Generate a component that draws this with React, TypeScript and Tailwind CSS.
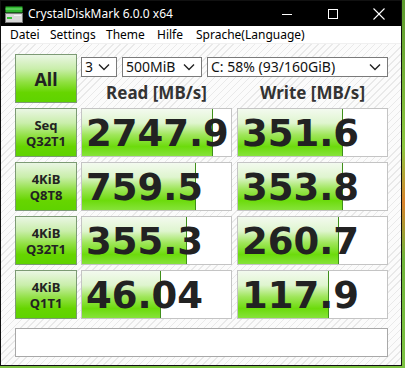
import React from "react";

type Row = { label: string; read: string; readBar: number; write: string; writeBar: number };

const rows: Row[] = [
  { label: "Seq\nQ32T1", read: "2747.9", readBar: 131, write: "351.6", writeBar: 105 },
  { label: "4KiB\nQ8T8", read: "759.5", readBar: 114, write: "353.8", writeBar: 105 },
  { label: "4KiB\nQ32T1", read: "355.3", readBar: 105, write: "260.7", writeBar: 101 },
  { label: "4KiB\nQ1T1", read: "46.04", readBar: 79, write: "117.9", writeBar: 91 },
];

const greenBtn =
  "border border-[#7c9a74] bg-[linear-gradient(to_bottom,#eaf6e4_0%,#c9eeaa_30%,#8fe040_58%,#66d500_80%,#5fd300_100%)] flex flex-col items-center justify-center text-[#222] font-bold";

function Chevron() {
  return (
    <svg width="12" height="8" viewBox="0 0 12 8" className="shrink-0">
      <polyline points="1,1.5 6,6.5 11,1.5" fill="none" stroke="#222" strokeWidth="1.4" />
    </svg>
  );
}

function Select({ text, w }: { text: string; w: string }) {
  return (
    <div className={`${w} h-[20px] bg-white border border-[#7a7a7a] flex items-center justify-between pl-[3px] pr-[6px] text-[14px] text-[#111] leading-none`}>
      <span>{text}</span>
      <Chevron />
    </div>
  );
}

function Cell({ value, bar }: { value: string; bar: number }) {
  return (
    <div className="relative w-[151px] h-[49px] bg-white border border-[#c4c4c4]">
      <div
        className="absolute left-0 top-0 bottom-0 border-r border-[#3f8f1a] bg-[linear-gradient(to_bottom,#f3faef_0%,#dff5cf_30%,#9fe65a_55%,#6cdb0c_80%,#86e33a_100%)]"
        style={{ width: bar }}
      />
      <div className="relative h-full flex items-center pl-[4px] pt-[1px] font-['DejaVu_Sans',sans-serif] text-[37px] font-bold text-[#222] leading-none whitespace-nowrap">
        {value}
      </div>
    </div>
  );
}

function AppIcon() {
  return (
    <svg width="18" height="17" viewBox="0 0 18 17">
      <rect x="0.5" y="0.5" width="17" height="6" fill="#2fb52f" />
      <rect x="0.5" y="2.5" width="17" height="1" fill="#7ee07e" />
      <rect x="0.5" y="7.5" width="17" height="9" fill="#d8d8d8" stroke="#777" />
      <rect x="2" y="11" width="5" height="2" fill="#34c334" />
      <rect x="9" y="9" width="7" height="1" fill="#f4f4f4" />
    </svg>
  );
}

export default function App() {
  return (
    <div className="w-[405px] h-[368px] bg-[linear-gradient(to_bottom,#5c9a2e,#8cc63f_40%,#d9822b_55%,#6fb33a_70%,#7cc242)] font-['Noto_Sans',sans-serif] overflow-hidden">
      <div className="w-[402px] h-[366px] bg-black border border-[#111] flex flex-col">
        {/* Title bar */}
        <div className="h-[25px] flex items-center text-white">
          <div className="ml-[4px] mt-[1px]">
            <AppIcon />
          </div>
          <span className="ml-[5px] text-[12px] leading-none">CrystalDiskMark 6.0.0 x64</span>
          <div className="ml-auto flex h-full">
            <div className="w-[46px] h-full flex items-center justify-center">
              <svg width="10" height="10" viewBox="0 0 10 10">
                <line x1="0" y1="5.5" x2="10" y2="5.5" stroke="#fff" strokeWidth="1" />
              </svg>
            </div>
            <div className="w-[46px] h-full flex items-center justify-center">
              <svg width="10" height="10" viewBox="0 0 10 10">
                <rect x="0.5" y="0.5" width="9" height="9" fill="none" stroke="#fff" strokeWidth="1" />
              </svg>
            </div>
            <div className="w-[45px] h-full flex items-center justify-center">
              <svg width="12" height="12" viewBox="0 0 12 12">
                <line x1="0.5" y1="0.5" x2="11.5" y2="11.5" stroke="#fff" strokeWidth="1.1" />
                <line x1="11.5" y1="0.5" x2="0.5" y2="11.5" stroke="#fff" strokeWidth="1.1" />
              </svg>
            </div>
          </div>
        </div>

        {/* Menu bar */}
        <div className="h-[18px] bg-white flex items-center pl-[9px] text-[12px] text-black leading-none border-b border-[#f0f0f0]">
          <span className="w-[40px]">Datei</span>
          <span className="w-[56px]">Settings</span>
          <span className="w-[51px]">Theme</span>
          <span className="w-[39px]">Hilfe</span>
          <span>Sprache(Language)</span>
        </div>

        {/* Body */}
        <div className="flex-1 bg-[repeating-linear-gradient(135deg,#fbfbfb_0px,#fbfbfb_4px,#e9e9e9_4px,#e9e9e9_5px)] pl-[14px] pt-[10px] flex flex-col">
          <div className="flex h-[49px]">
            <div className={`${greenBtn} w-[62px] h-[49px] text-[18px] leading-none`}>All</div>
            <div className="ml-[4px] w-[307px] flex flex-col">
              <div className="mt-[3px] flex">
                <Select text="3" w="w-[36px]" />
                <div className="ml-[5px]">
                  <Select text="500MiB" w="w-[80px]" />
                </div>
                <div className="ml-[5px]">
                  <Select text="C: 58% (93/160GiB)" w="w-[181px]" />
                </div>
              </div>
              <div className="flex flex-1 pt-[4px] text-[17px] font-bold text-[#333] leading-none">
                <div className="w-[151px] flex items-center justify-center">Read [MB/s]</div>
                <div className="ml-[5px] w-[151px] flex items-center justify-center">Write [MB/s]</div>
              </div>
            </div>
          </div>

          <div className="mt-[5px] flex flex-col gap-[5px]">
            {rows.map((r) => (
              <div key={r.label} className="flex">
                <div className={`${greenBtn} w-[62px] h-[49px] text-[13px] leading-[16px] text-center whitespace-pre-line`}>
                  {r.label}
                </div>
                <div className="ml-[4px]">
                  <Cell value={r.read} bar={r.readBar} />
                </div>
                <div className="ml-[5px]">
                  <Cell value={r.write} bar={r.writeBar} />
                </div>
              </div>
            ))}
          </div>

          <div className="mt-[9px] w-[373px] h-[29px] bg-white border border-[#a8a8a8]" />
        </div>
      </div>
    </div>
  );
}
